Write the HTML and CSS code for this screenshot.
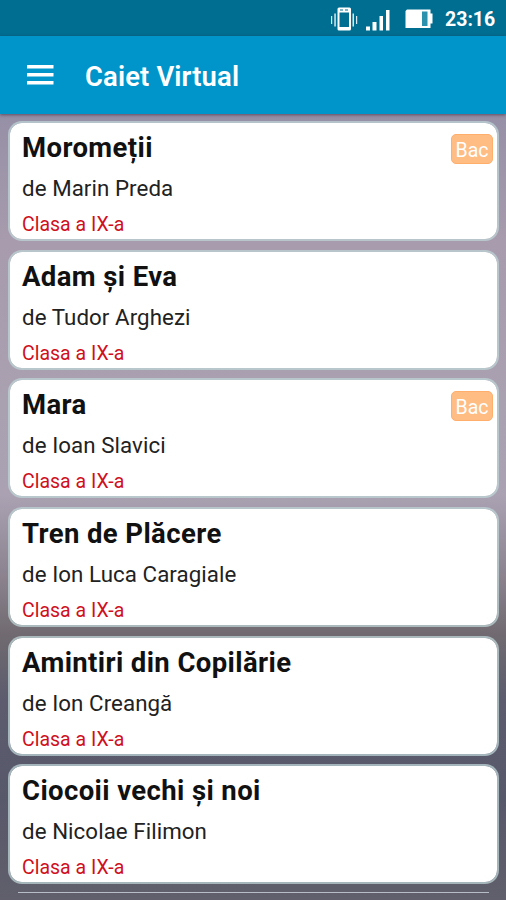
FILE: index.html
```html
<!DOCTYPE html>
<html lang="ro">
<head>
<meta charset="utf-8">
<title>Caiet Virtual</title>
<link rel="stylesheet" href="styles.css">
</head>
<body>
<div class="screen">
  <div class="status">
    <svg class="status-icons" width="108" height="36" viewBox="0 0 108 36" fill="#fff">
      <path d="M1 16h1.200v8H1zM4.300 13.500h1.500v13H4.300zM22.500 13.500H24v13h-1.500zM26 16h1.200v8H26z" opacity=".85"/>
      <path fill-rule="evenodd" d="M9 7.500h10.500q1.500 0 1.500 1.500v20q0 1.500-1.500 1.500H9q-1.500 0-1.500-1.500V9q0-1.500 1.500-1.500zM9.500 12.500v14.500h9.500V12.500zM10 9.500v1h3v-1zM15 9.500v1h3v-1z"/>
      <path d="M36 26.500h4v4h-4zM42.500 22h4v8.500h-4zM49.500 16h3.500v14.500h-3.500zM56 10h3.500v20.500H56z"/>
      <path d="M77 9.500h23.500v4h2v10h-2v4.500H75.500V11z"/>
      <path d="M92 11.500h5.500v14.500H92z" fill="#2b91ac"/>
    </svg>
    <span class="clock">23:16</span>
  </div>
  <header class="appbar">
    <svg class="menu" width="27" height="21" viewBox="0 0 27 21" fill="#fff"><path d="M0 0h26.500v3.500H0zM0 8h26.500v3.500H0zM0 16h26.500v3.500H0z"/></svg>
    <h1>Caiet Virtual</h1>
  </header>
  <main class="list">
    <article class="card"><h2>Moromeții</h2><p class="author">de Marin Preda</p><p class="grade">Clasa a IX-a</p><span class="badge">Bac</span></article>
    <article class="card"><h2>Adam și Eva</h2><p class="author">de Tudor Arghezi</p><p class="grade">Clasa a IX-a</p></article>
    <article class="card"><h2>Mara</h2><p class="author">de Ioan Slavici</p><p class="grade">Clasa a IX-a</p><span class="badge">Bac</span></article>
    <article class="card"><h2>Tren de Plăcere</h2><p class="author">de Ion Luca Caragiale</p><p class="grade">Clasa a IX-a</p></article>
    <article class="card"><h2>Amintiri din Copilărie</h2><p class="author">de Ion Creangă</p><p class="grade">Clasa a IX-a</p></article>
    <article class="card"><h2>Ciocoii vechi și noi</h2><p class="author">de Nicolae Filimon</p><p class="grade">Clasa a IX-a</p></article>
    <div class="next-edge"></div>
  </main>
</div>
</body>
</html>
```
FILE: styles.css
```css
* { box-sizing: border-box; }
body { margin: 0; font-family: Roboto, "Noto Sans", sans-serif; }
h1, h2, p { margin: 0; white-space: nowrap; }
.screen {
  width: 506px; height: 900px; overflow: hidden;
  display: flex; flex-direction: column;
  background: linear-gradient(180deg, #9690a6 114px, #a79bad 240px, #a9a0b0 400px, #aaa2b2 495px, #8e8592 570px, #706a70 635px, #5c5c6e 700px, #58586b 800px, #605f6b 900px);
}
.status {
  height: 36px; flex: none; background: #006e91; color: #fff;
  display: flex; align-items: center; justify-content: flex-end;
  padding-right: 11px;
}
.status-icons { margin-right: 7px; }
.clock { width: 50px; font-size: 19.5px; line-height: 36px; font-weight: 700; padding-top: 3px; }
.appbar {
  height: 78px; flex: none; background: #0095ca; color: #fff;
  display: flex; align-items: center; padding-left: 27px;
  box-shadow: 0 1px 3px rgba(60, 30, 50, .6);
}
.menu { margin-right: 31px; }
h1 { font-size: 27.4px; line-height: 36px; font-weight: 600; letter-spacing: .15px; padding-top: 3px; }
.list { padding: 7px 7px 0 8px; display: flex; flex-direction: column; gap: 8.7px; }
.card {
  position: relative; height: 120px; flex: none;
  padding: 7px 12px 0;
  border: 2px solid rgba(190, 212, 214, .75); border-radius: 14px;
  background: #fff; background-clip: padding-box; color: #111;
}
h2 { font-size: 27.5px; line-height: 36px; font-weight: 700; letter-spacing: .39px; }
.author { font-size: 22.3px; line-height: 28px; margin-top: 8px; font-weight: 400; letter-spacing: .07px; color: #222; }
.grade { font-size: 19.5px; line-height: 26px; margin-top: 10px; color: #d0101c; }
.badge {
  position: absolute; top: 11px; right: 4px;
  width: 42px; height: 30px; border: 1px solid #ffae6c; border-radius: 5px;
  background: #ffbd84; color: #fff; font-size: 19.5px; line-height: 31px; text-align: center;
}
.next-edge { height: 1px; margin: -1px 10px 0; background: #b6bdc5; }
```
